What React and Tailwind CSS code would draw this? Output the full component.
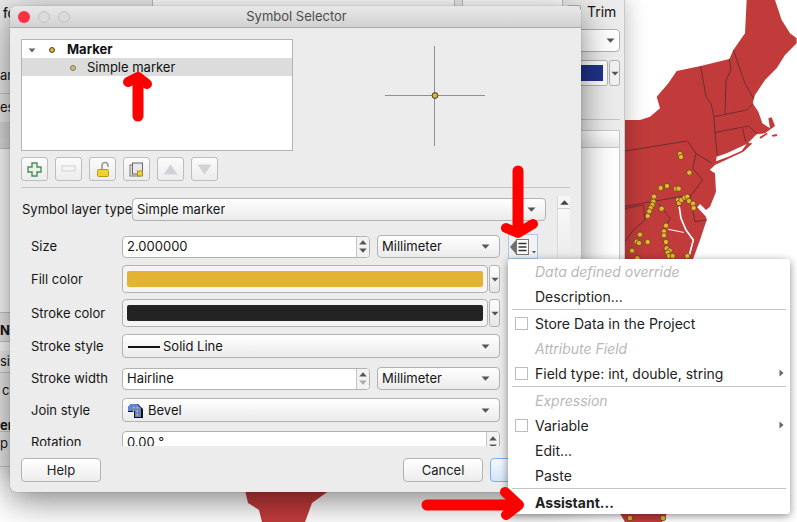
import React from "react";

const font = { fontFamily: "Inter, 'Liberation Sans', sans-serif" };

function Caret({ className = "" }) {
  return (
    <svg width="9" height="5" viewBox="0 0 9 5" className={className}>
      <path d="M0.5 0.5H8.5L4.5 4.8Z" fill="#555" />
    </svg>
  );
}

function Spin({ dim = false, className = "" }) {
  return (
    <div className={"flex w-[13px] flex-col items-center justify-center gap-[3px] border-l border-[#c4c4c4] " + className}>
      <svg width="8" height="5" viewBox="0 0 8 5"><path d="M4 0.3L7.8 4.6H0.2Z" fill="#555" /></svg>
      <svg width="8" height="5" viewBox="0 0 8 5"><path d="M0.2 0.4H7.8L4 4.7Z" fill={dim ? "#aaa" : "#555"} /></svg>
    </div>
  );
}

function Select({ children, className = "", inner = "" }) {
  return (
    <div className={"flex items-center justify-between rounded-[4px] border border-[#b2b2b2] bg-gradient-to-b from-white to-[#ebebeb] pl-[4px] pr-[9px] text-[13px] text-[#151515] " + className}>
      <div className={"flex items-center truncate " + inner}>{children}</div>
      <Caret />
    </div>
  );
}

function NumInput({ value, dim, className = "" }) {
  return (
    <div className={"flex items-stretch overflow-hidden rounded-[4px] border border-[#b2b2b2] bg-white text-[13px] text-[#151515] " + className}>
      <div className="flex flex-1 items-center pl-[4px]">{value}</div>
      <Spin dim={dim} className="bg-[#f2f2f2]" />
    </div>
  );
}

function ColorBtn({ color }) {
  return (
    <div className="flex h-[28px] w-[378px] gap-px">
      <div className="flex flex-1 items-stretch rounded-[4px] border border-[#b2b2b2] bg-[#f4f4f4] px-[4px] py-[5px]">
        <div className="flex-1 rounded-[2px]" style={{ background: color }} />
      </div>
      <div className="flex w-[11px] items-center justify-center rounded-[3px] border border-[#b2b2b2] bg-gradient-to-b from-white to-[#e6e6e6]">
        <Caret className="w-[8px]" />
      </div>
    </div>
  );
}

function Label({ children, className = "" }) {
  return <div className={"w-[91px] shrink-0 text-[13px] text-[#151515] " + className}>{children}</div>;
}

function ToolBtn({ children }) {
  return (
    <div className="flex h-[24px] w-[27px] items-center justify-center rounded-[3px] border border-[#bdbdbd] bg-gradient-to-b from-[#fbfbfb] to-[#ececec]">
      {children}
    </div>
  );
}

function MenuRow({ children, check, sub, disabled, bold, h = "h-[25px]" }) {
  return (
    <div className={"relative flex items-center pl-[27px] text-[14px] " + h + " " + (disabled ? "italic text-[#b8b8b8] " : "text-[#222] ") + (bold ? "font-bold" : "")}>
      {check && <span className="absolute left-[7px] top-[6px] h-[13px] w-[13px] border border-[#bdbdbd] bg-white" />}
      {children}
      {sub && (
        <svg width="5" height="8" viewBox="0 0 5 8" className="absolute right-[6px] top-[8px]">
          <path d="M0.5 0.5L4.5 4L0.5 7.5Z" fill="#666" />
        </svg>
      )}
    </div>
  );
}

function MenuSep() {
  return <div className="mx-[4px] h-[2px] border-t border-[#c4c4c4]" />;
}

function MapLayer() {
  const dots = [
    [240,462],[243,471],[268,518],[182,564],[201,558],[228,566],[236,566],[162,590],[160,605],[157,615],[152,624],[148,634],[143,648],[185,626],
    [234,600],[237,609],[244,600],[254,593],[262,590],[267,603],[279,611],[281,624],[198,677],[192,694],[192,706],[120,704],[110,725],[117,729],
    [143,726],[198,726],[200,745],[209,752],[203,758],[96,752],[207,768],[218,768],[262,768],[112,775],
  ];
  return (
    <svg className="absolute left-0 top-0" width="797" height="522" viewBox="0 0 797 522">
      <g transform="translate(600 0) scale(0.33333)">
        <path
          fill="#c23b3b"
          d="M0 360L120 360L150 350L180 325L170 290L205 250L230 213L302 198L388 177L400 150L435 100L440 0L525 0L545 60L570 100L590 115L590 130L555 165L530 205L495 240L465 285L458 310L475 335L487 370L510 385L505 355L515 352L525 378L495 400L470 403L445 428L455 432L430 455L345 495L330 510L345 520L348 575L330 620L318 630L300 612L292 622L318 650L320 660L300 720L280 775L280 790L0 790Z"
        />
        <path fill="#fff" d="M350 470L380 460L440 432L425 452L385 470L348 484Z" />
        <path fill="#fff" d="M330 508L345 502L340 516Z" />
        <path fill="none" stroke="#fff" strokeWidth="5" strokeLinecap="round" d="M238 622L243 655L258 690L280 720L268 765" />
        <path fill="none" stroke="#fff" strokeWidth="3" strokeLinecap="round" d="M205 688L250 697" />
        <path fill="#c23b3b" d="M478 412L500 398L503 402L482 416ZM515 405L530 402L532 408L518 410ZM448 430L456 428L452 436Z" />
        <g fill="none" stroke="#5f2c30" strokeWidth="2.6">
          <path d="M302 198L318 290L333 310L342 350L345 400L352 465" />
          <path d="M388 177L393 210L378 240L375 340" />
          <path d="M400 150L435 250L460 295" />
          <path d="M342 350L440 330L460 310" />
          <path d="M343 398L445 378L470 400" />
          <path d="M428 385L437 425" />
          <path d="M0 465L262 423L288 460L335 490" />
          <path d="M288 460L278 505L308 540L270 590" />
          <path d="M0 632L270 585L285 665L320 660" />
          <path d="M0 640L130 615L135 660L100 690L75 725" />
          <path d="M175 610L210 655L190 690" />
        </g>
        {dots.map(([x, y], i) => (
          <circle key={i} cx={x} cy={y} r="8" fill="#e8b32e" stroke="#4d3a1c" strokeWidth="2" />
        ))}
      </g>
      <path d="M245 490L330 490L312 503L305 522L262 522L259 510L248 503Z" fill="#c23b3b" />
      <path d="M619 512L668 512L662 522L625 522Z" fill="#c23b3b" />
      <g fill="#e8b32e" stroke="#4d3a1c" strokeWidth="0.7">
        <circle cx="630" cy="518" r="2.8" />
        <circle cx="663" cy="518" r="2.8" />
      </g>
    </svg>
  );
}

function BackWindow() {
  const line = "border-b border-[#c6c6c6]";
  return (
    <div className="absolute left-0 top-0 flex h-[468px] w-[625px] border-r border-[#c8c8c8] bg-[#ececec] text-[13px] text-[#151515] shadow-[0_0_22px_rgba(0,0,0,0.28)]">
      <div className="flex w-[30px] shrink-0 flex-col overflow-hidden">
        <div className="h-[62px] pl-[3px] pt-[4px] font-medium">fo</div>
        <div className={"flex h-[32px] items-start pt-[4px] " + line}><span>am</span></div>
        <div className="flex h-[28px] items-center"><span>es</span></div>
        <div className="h-[16px] bg-[#dcdcdc]" />
        <div className={"flex h-[11px] items-center justify-center bg-[#dedede] " + line}><Caret className="w-[5px]" /></div>
        <div className={"h-[164px] bg-white " + line} />
        <div className={"flex h-[29px] items-center pt-[8px] font-bold " + line}>N</div>
        <div className="h-[9px] bg-white" />
        <div className={"flex h-[22px] items-center bg-[#f2f2f2] pt-[1px] " + line}><span>sif</span></div>
        <div className="flex h-[36px] items-center pl-[2px]">c</div>
        <div className={"flex h-[23px] items-center pt-[12px] font-bold " + line}><span>er</span></div>
        <div className={"flex h-[35px] items-center pb-[10px] " + line}>p</div>
      </div>
      <div className="flex-1" />
      <div className="relative flex w-[60px] shrink-0 flex-col pr-[4px]">
        <div className="flex h-[23px] items-center pl-[24px] text-[14px]">
          <span className="-ml-[20px] mr-[6px] h-[13px] w-[13px] shrink-0 border border-[#bbb] bg-white" />
          Trim
        </div>
        <div className="mt-[6px] flex h-[23px] items-center justify-end rounded-[4px] border border-[#b2b2b2] bg-white pr-[4px]">
          <Caret />
        </div>
        <div className="mt-[8px] flex h-[26px] gap-px">
          <div className="flex flex-1 items-stretch rounded-[3px] border border-[#b2b2b2] bg-white py-[4px] pr-[4px]">
            <div className="flex-1 bg-[#20338a]" />
          </div>
          <div className="flex w-[11px] items-center justify-center rounded-[3px] border border-[#b2b2b2] bg-[#f2f2f2]">
            <Caret className="w-[8px]" />
          </div>
        </div>
        <div className="mt-[33px] border-t border-[#c6c6c6]" />
        <div className="mt-[10px] h-[18px] border border-[#c6c6c6] bg-gradient-to-b from-white to-[#e8e8e8]" />
        <div className="flex-1 border-x border-[#c6c6c6] bg-white" />
      </div>
    </div>
  );
}

function TopStrip() {
  return (
    <div className="absolute left-[152px] top-0 flex h-[16px] w-[415px] gap-[7px]">
      <div className="w-[303px] rounded-b-[3px] border border-t-0 border-[#bdbdbd] bg-white" />
      <div className="w-[101px] rounded-b-[3px] border border-t-0 border-[#bdbdbd] bg-white" />
    </div>
  );
}

function PreviewCross() {
  return (
    <svg width="102" height="102" viewBox="0 0 102 102">
      <path d="M50.5 1V101M1 50.5H101" stroke="#8f8f8f" strokeWidth="1" fill="none" />
      <circle cx="51" cy="50.5" r="2.9" fill="#e6b030" stroke="#3a3a3a" strokeWidth="1" />
    </svg>
  );
}

function DataDefinedBtn() {
  return (
    <div className="ml-[8px] flex h-[25px] w-[30px] shrink-0 items-center justify-center border border-[#a9c8ee] bg-[#f2f2f2]">
      <svg width="28" height="20" viewBox="0 0 28 20">
        <path d="M7 3L1 10L7 17Z" fill="#6e6e6e" />
        <rect x="7.5" y="2.5" width="12" height="15" fill="#fdfdfd" stroke="#777" />
        <path d="M9.5 6.5H17.5M9.5 10H17.5M9.5 13.5H17.5" stroke="#333" strokeWidth="1.3" />
        <path d="M23 14H27L25 16.5Z" fill="#555" />
      </svg>
    </div>
  );
}

function Dialog() {
  return (
    <div className="absolute left-[10px] top-[6px] flex h-[486px] w-[571px] flex-col rounded-[6px] bg-[#ececec] shadow-[0_8px_34px_rgba(0,0,0,0.5),0_0_1px_rgba(0,0,0,0.5)]">
      <div className="relative flex h-[22px] shrink-0 items-center rounded-t-[6px] border-b border-[#ababab] bg-gradient-to-b from-[#e8e8e8] to-[#d2d2d2] pl-[8px]">
        <div className="flex gap-[8px]">
          <span className="h-[12px] w-[12px] rounded-full bg-[#fc3042]" />
          <span className="h-[12px] w-[12px] rounded-full border border-[#c4c4c4] bg-[#dadada]" />
          <span className="h-[12px] w-[12px] rounded-full border border-[#c4c4c4] bg-[#dadada]" />
        </div>
        <div className="flex-1 pr-[58px] text-center text-[13px] text-[#4c4c4c]">Symbol Selector</div>
      </div>

      <div className="flex min-h-0 flex-1 flex-col px-[11px] pt-[11px]">
        <div className="flex h-[112px] shrink-0">
          <div className="h-[112px] w-[272px] shrink-0 border border-[#b4b4b4] bg-white text-[13px] text-[#111]">
            <div className="flex h-[18px] items-center pl-[6px] pt-[2px]">
              <svg width="9" height="5" viewBox="0 0 9 5"><path d="M0.5 0.5H7.5L4 4.5Z" fill="#666" /></svg>
              <span className="ml-[12px] h-[6px] w-[6px] rounded-full border border-[#444] bg-[#e6b030]" />
              <span className="ml-[12px] font-bold">Marker</span>
            </div>
            <div className="flex h-[18px] items-center bg-[#dcdcdc] pl-[48px] pt-[2px]">
              <span className="h-[6px] w-[6px] rounded-full border border-[#777] bg-[#d9bc63]" />
              <span className="ml-[11px]">Simple marker</span>
            </div>
          </div>
          <div className="flex flex-1 items-start pl-[91px] pt-[6px]">
            <PreviewCross />
          </div>
        </div>

        <div className="mt-[6px] flex shrink-0 gap-[7px]">
          <ToolBtn>
            <svg width="15" height="15" viewBox="0 0 15 15"><path d="M5 1H10V5H14V10H10V14H5V10H1V5H5Z" fill="#e8f3e6" stroke="#4f8a5b" strokeWidth="1.4" /></svg>
          </ToolBtn>
          <ToolBtn>
            <svg width="15" height="8" viewBox="0 0 15 8"><rect x="1" y="1" width="13" height="5" fill="#f4f4f4" stroke="#d2d2d2" /></svg>
          </ToolBtn>
          <ToolBtn>
            <svg width="14" height="17" viewBox="0 0 14 17">
              <path d="M6 8V4.5C6 2.5 7.5 1.5 9 1.5S12 2.5 12 4.5V6" fill="none" stroke="#9a9a9a" strokeWidth="1.6" />
              <rect x="1.5" y="8.5" width="11" height="7" rx="1" fill="#f2d02e" stroke="#b79a20" />
            </svg>
          </ToolBtn>
          <ToolBtn>
            <svg width="15" height="15" viewBox="0 0 15 15">
              <rect x="1" y="3" width="10" height="11" fill="#dedede" stroke="#777" />
              <rect x="3.5" y="1" width="10" height="11" fill="#e9e9e9" stroke="#666" />
              <rect x="8.5" y="9" width="5" height="5" fill="#f2d02e" stroke="#a98c20" />
            </svg>
          </ToolBtn>
          <ToolBtn>
            <svg width="15" height="11" viewBox="0 0 15 11"><path d="M7.5 0.5L14.5 10.5H0.5Z" fill="#cfd3d8" /></svg>
          </ToolBtn>
          <ToolBtn>
            <svg width="15" height="11" viewBox="0 0 15 11"><path d="M0.5 0.5H14.5L7.5 10.5Z" fill="#cfd3d8" /></svg>
          </ToolBtn>
        </div>

        <div className="mt-[6px] w-[549px] shrink-0 border-t border-[#c4c4c4]" />

        <div className="flex h-[258px] shrink-0 overflow-hidden">
          <div className="w-[525px] shrink-0 pt-[10px]">
            <div className="flex h-[23px] items-center pl-[1px]">
              <div className="w-[110px] shrink-0 whitespace-nowrap text-[13px] text-[#151515]">Symbol layer type</div>
              <Select className="h-[23px] w-[414px]">Simple marker</Select>
            </div>
            <div className="ml-[10px] mt-[14px] flex flex-col">
              <div className="flex h-[23px] items-center">
                <Label>Size</Label>
                <NumInput value="2.000000" className="h-[22px] w-[248px]" />
                <Select className="ml-[7px] h-[23px] w-[123px]">Millimeter</Select>
                <DataDefinedBtn />
              </div>
              <div className="mt-[7px] flex h-[28px] items-center">
                <Label className="pt-[2px]">Fill color</Label>
                <ColorBtn color="#e5b333" />
              </div>
              <div className="mt-[6px] flex h-[28px] items-center">
                <Label className="pt-[2px]">Stroke color</Label>
                <ColorBtn color="#232323" />
              </div>
              <div className="mt-[7px] flex h-[24px] items-center">
                <Label className="pt-[2px]">Stroke style</Label>
                <Select className="h-[24px] w-[378px]" inner="pt-[2px]">
                  <span className="ml-[1px] mr-[3px] inline-block h-[2px] w-[32px] bg-[#111]" />
                  Solid Line
                </Select>
              </div>
              <div className="mt-[9px] flex h-[23px] items-center">
                <Label>Stroke width</Label>
                <NumInput value="Hairline" dim className="h-[22px] w-[248px]" />
                <Select className="ml-[7px] h-[23px] w-[123px]">Millimeter</Select>
              </div>
              <div className="mt-[8px] flex h-[24px] items-center">
                <Label className="pt-[2px]">Join style</Label>
                <Select className="h-[24px] w-[378px]" inner="pt-[2px]">
                  <svg width="15" height="14" viewBox="0 0 15 14" className="ml-[1px] mr-[5px]">
                    <path d="M0 3L3 0H10L15 5V14H6V8H0Z" fill="#111" />
                    <path d="M0 3L3 0H9L13 4V13H7V7H0Z" fill="#5f86cf" />
                    <path d="M5 3h1.5v1.5H5ZM8.5 3H10v1.5H8.5ZM8.5 6.5H10V8H8.5ZM8.5 10H10v1.5H8.5ZM5 6.5h1V8H5Z" fill="#ecc63a" />
                  </svg>
                  Bevel
                </Select>
              </div>
              <div className="mt-[9px] flex h-[23px] items-center">
                <Label>Rotation</Label>
                <NumInput value="0.00 °" className="h-[23px] w-[378px]" />
              </div>
            </div>
          </div>
          <div className="ml-[11px] mt-[8px] h-[62px] w-[13px] shrink-0 border-l border-[#d8d8d8] bg-gradient-to-b from-[#fafafa] to-[#ececec]">
            <div className="flex h-[13px] items-center justify-center border-b border-[#d0d0d0] bg-[#f6f6f6]">
              <svg width="9" height="5" viewBox="0 0 9 5"><path d="M4.5 0.2L8.8 4.8H0.2Z" fill="#444" /></svg>
            </div>
          </div>
        </div>

        <div className="mt-[12px] flex shrink-0 gap-[7px]">
          <div className="flex h-[24px] w-[80px] items-center justify-center rounded-[4px] border border-[#b2b2b2] bg-gradient-to-b from-white to-[#ededed] pt-[2px] text-[13px] text-[#222]">Help</div>
          <div className="flex-1" />
          <div className="flex h-[24px] w-[80px] items-center justify-center rounded-[4px] border border-[#b2b2b2] bg-gradient-to-b from-white to-[#ededed] pt-[2px] text-[13px] text-[#222]">Cancel</div>
          <div className="h-[24px] w-[80px] rounded-[4px] border border-[#79aef0] bg-gradient-to-b from-[#f4f8fe] to-[#d5e4f8]" />
        </div>
      </div>
    </div>
  );
}

function Menu() {
  return (
    <div className="absolute left-[508px] top-[259px] h-[255px] w-[282px] rounded-[3px] bg-white shadow-[0_2px_8px_rgba(0,0,0,0.45)]">
      <MenuRow disabled>Data defined override</MenuRow>
      <MenuRow>Description...</MenuRow>
      <MenuSep />
      <MenuRow check>Store Data in the Project</MenuRow>
      <MenuRow disabled>Attribute Field</MenuRow>
      <MenuRow check sub>Field type: int, double, string</MenuRow>
      <MenuSep />
      <MenuRow disabled>Expression</MenuRow>
      <MenuRow check sub>Variable</MenuRow>
      <MenuRow>Edit...</MenuRow>
      <MenuRow>Paste</MenuRow>
      <MenuSep />
      <MenuRow bold h="h-[24px]">Assistant...</MenuRow>
    </div>
  );
}

function Arrows() {
  return (
    <svg className="pointer-events-none absolute left-0 top-0" width="797" height="522" viewBox="0 0 797 522">
      <g fill="none" stroke="#fe0000" strokeLinecap="round" strokeLinejoin="round">
        <path d="M138 116V78" strokeWidth="11" />
        <path d="M128 82L138 77L147 84" strokeWidth="10" />
        <path d="M518 171V230" strokeWidth="11" />
        <path d="M506 228L518 233L533 224" strokeWidth="10" />
        <path d="M427 505H515" strokeWidth="11" />
        <path d="M505 492L519 505L506 515" strokeWidth="10" />
      </g>
    </svg>
  );
}

export default function App() {
  return (
    <div className="relative h-[522px] w-[797px] overflow-hidden bg-white" style={font}>
      <MapLayer />
      <BackWindow />
      <TopStrip />
      <Dialog />
      <Menu />
      <Arrows />
    </div>
  );
}
